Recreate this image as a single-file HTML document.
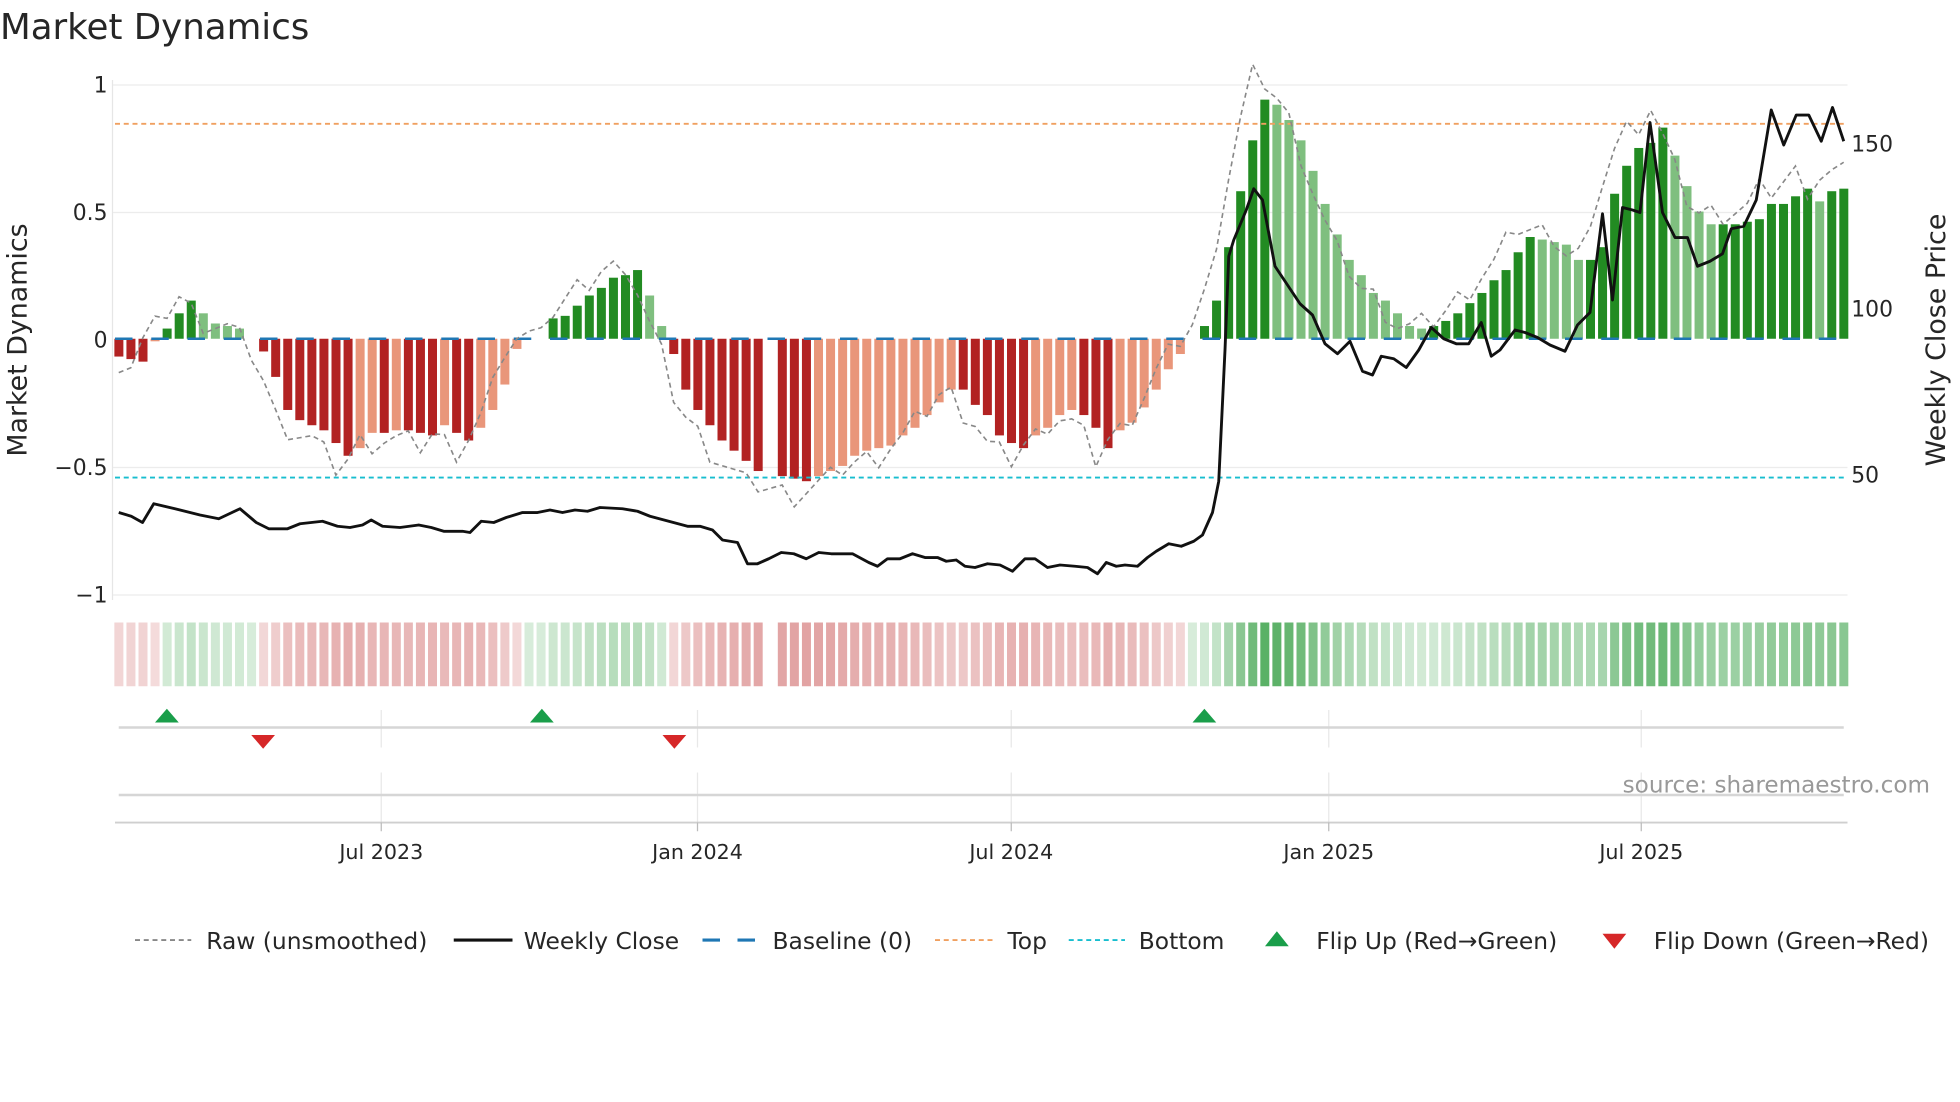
<!DOCTYPE html>
<html><head><meta charset="utf-8"><style>
html,body{margin:0;padding:0;background:#fff;width:1960px;height:1102px;overflow:hidden}
svg{display:block}
text{font-family:"DejaVu Sans","Liberation Sans",sans-serif;fill:#262626}
</style></head><body>
<svg id="s" width="1960" height="1102" viewBox="0 0 1568 881.6" xmlns="http://www.w3.org/2000/svg">
<text x="0" y="31" font-size="28.5">Market Dynamics</text>
<g stroke="#ececec" stroke-width="1">
<line x1="90" y1="68" x2="1478" y2="68"/><line x1="90" y1="170" x2="1478" y2="170"/>
<line x1="90" y1="374" x2="1478" y2="374"/><line x1="90" y1="476" x2="1478" y2="476"/>
</g>
<line x1="90" y1="64" x2="90" y2="480" stroke="#e6e6e6"/>
<g font-size="17.5" text-anchor="end">
<text x="86" y="74">1</text><text x="86" y="176">0.5</text><text x="86" y="278">0</text>
<text x="86" y="380">−0.5</text><text x="86" y="482">−1</text>
</g>
<g font-size="17.5">
<text x="1481" y="121">150</text><text x="1481" y="253">100</text><text x="1481" y="386">50</text>
</g>
<text transform="translate(21,272) rotate(-90)" font-size="21.5" text-anchor="middle">Market Dynamics</text>
<text transform="translate(1556,272) rotate(-90)" font-size="21.5" text-anchor="middle">Weekly Close Price</text>
<g id="bars"></g>
<line x1="92" y1="271" x2="1478" y2="271" stroke="#1f77b4" stroke-width="2" stroke-dasharray="14,15"/>
<line x1="92" y1="99" x2="1478" y2="99" stroke="#f0a060" stroke-width="1.5" stroke-dasharray="4,3"/>
<line x1="92" y1="382" x2="1478" y2="382" stroke="#17becf" stroke-width="1.5" stroke-dasharray="4,3"/>
<polyline id="raw" fill="none" stroke="#888" stroke-width="1.3" stroke-dasharray="4,3"/>
<polyline id="price" fill="none" stroke="#111" stroke-width="2.3" stroke-linejoin="round"/>
<g id="strip"></g>
<g stroke="#e8e8e8"><line x1="305" y1="568" x2="305" y2="598"/><line x1="558" y1="568" x2="558" y2="598"/><line x1="809" y1="568" x2="809" y2="598"/><line x1="1063" y1="568" x2="1063" y2="598"/><line x1="1313" y1="568" x2="1313" y2="598"/>
<line x1="305" y1="618" x2="305" y2="658"/><line x1="558" y1="618" x2="558" y2="658"/><line x1="809" y1="618" x2="809" y2="658"/><line x1="1063" y1="618" x2="1063" y2="658"/><line x1="1313" y1="618" x2="1313" y2="658"/></g>
<line x1="95" y1="582" x2="1475" y2="582" stroke="#d6d6d6" stroke-width="2"/>
<line x1="95" y1="636" x2="1475" y2="636" stroke="#d6d6d6" stroke-width="2"/>
<line x1="92" y1="658" x2="1478" y2="658" stroke="#cfcfcf" stroke-width="1.5"/>
<g stroke="#bbb"><line x1="305" y1="658" x2="305" y2="665"/><line x1="558" y1="658" x2="558" y2="665"/><line x1="809" y1="658" x2="809" y2="665"/><line x1="1063" y1="658" x2="1063" y2="665"/><line x1="1313" y1="658" x2="1313" y2="665"/></g>
<g fill="#1a9e4a"><polygon points="124,578 143,578 133.5,567"/><polygon points="424,578 443,578 433.5,567"/><polygon points="954,578 973,578 963.5,567"/></g>
<g fill="#d62728"><polygon points="201,588 220,588 210.5,599"/><polygon points="530,588 549,588 539.5,599"/></g>
<text x="1544" y="634" font-size="18.5" fill="#999" style="fill:#999" text-anchor="end">source: sharemaestro.com</text>
<g font-size="16.5" text-anchor="middle"><text x="305" y="687">Jul 2023</text><text x="558" y="687">Jan 2024</text><text x="809" y="687">Jul 2024</text><text x="1063" y="687">Jan 2025</text><text x="1313" y="687">Jul 2025</text></g>
<g font-size="18.7">
<line x1="108" y1="752" x2="153" y2="752" stroke="#888" stroke-width="1.5" stroke-dasharray="4,3"/><text x="165" y="759">Raw (unsmoothed)</text>
<line x1="363" y1="752" x2="410" y2="752" stroke="#111" stroke-width="2.5"/><text x="419" y="759">Weekly Close</text>
<line x1="562" y1="752" x2="607" y2="752" stroke="#1f77b4" stroke-width="2.5" stroke-dasharray="14,14"/><text x="618" y="759">Baseline (0)</text>
<line x1="748" y1="752" x2="794" y2="752" stroke="#f0a060" stroke-width="1.5" stroke-dasharray="4,3"/><text x="806" y="759">Top</text>
<line x1="855" y1="752" x2="900" y2="752" stroke="#17becf" stroke-width="1.5" stroke-dasharray="4,3"/><text x="911" y="759">Bottom</text>
<polygon points="1012,757 1031,757 1021.5,745" fill="#1a9e4a"/><text x="1053" y="759">Flip Up (Red→Green)</text>
<polygon points="1282,747 1301,747 1291.5,759" fill="#d62728"/><text x="1323" y="759">Flip Down (Green→Red)</text>
</g>
</svg>
<script>
var v=[-0.07,-0.08,-0.09,-0.01,0.04,0.1,0.15,0.1,0.06,0.05,0.04,0,-0.05,-0.15,-0.28,-0.32,-0.34,-0.36,-0.41,-0.46,-0.43,-0.37,-0.37,-0.36,-0.36,-0.37,-0.38,-0.34,-0.37,-0.40,-0.35,-0.28,-0.18,-0.04,0,0,0.08,0.09,0.13,0.17,0.2,0.24,0.25,0.27,0.17,0.05,-0.06,-0.2,-0.28,-0.34,-0.4,-0.44,-0.48,-0.52,null,-0.54,-0.55,-0.56,-0.54,-0.52,-0.5,-0.46,-0.44,-0.43,-0.42,-0.38,-0.35,-0.3,-0.25,-0.2,-0.2,-0.26,-0.3,-0.38,-0.41,-0.43,-0.38,-0.35,-0.3,-0.28,-0.3,-0.35,-0.43,-0.36,-0.33,-0.27,-0.2,-0.12,-0.06,0,0.05,0.15,0.36,0.58,0.78,0.94,0.92,0.86,0.78,0.66,0.53,0.41,0.31,0.25,0.18,0.15,0.1,0.05,0.04,0.05,0.07,0.1,0.14,0.18,0.23,0.27,0.34,0.4,0.39,0.38,0.37,0.31,0.31,0.36,0.57,0.68,0.75,0.77,0.83,0.72,0.6,0.5,0.45,0.45,0.45,0.46,0.47,0.53,0.53,0.56,0.59,0.54,0.58,0.59];
var NS="http://www.w3.org/2000/svg",sp=9.65,x0=95,h="",st="",raw=[],prev=0;
function Y(a){return 271-a*203.5}
for(var i=0;i<v.length;i++){var a=v[i],x=x0+i*sp;if(a===null){prev=0;continue;}
 var dark=Math.abs(a)>=Math.abs(prev)-0.001;prev=a;
 var c=a>=0?(dark?"#228b22":"#7fbf7f"):(dark?"#b22222":"#e9967a");
 var y=Math.min(Y(a),271),hh=Math.abs(a)*203.5;
 if(hh>0.5)h+='<rect x="'+(x-3.5)+'" y="'+y+'" width="7.2" height="'+hh+'" fill="'+c+'"/>';
 var al=0.18+Math.min(Math.abs(a),0.95)*0.6;
 var sc=a>=0?"rgba(34,150,50,"+al+")":"rgba(190,50,50,"+(0.17+Math.abs(a)*0.5)+")";
 st+='<rect x="'+(x-3.5)+'" y="498" width="7.2" height="51" fill="'+sc+'"/>';
 var n=v[i+1]==null?a:v[i+1];var r=n*1.1+((i*37)%7-3)*0.015;
 raw.push(x+","+Y(r).toFixed(1));}
document.getElementById("bars").innerHTML=h;
document.getElementById("strip").innerHTML=st;
document.getElementById("raw").setAttribute("points",raw.join(" "));
document.getElementById("price").setAttribute("points","95,410 105,413 114,418 123,403 140,407 160,412 175,415 192,407 205,418 215,423 230,423 240,419 258,417 270,421 280,422 290,420 297,416 306,421 320,422 335,420 345,422 355,425 370,425 376,426 385,417 395,418 405,414 418,410 430,410 440,408 450,410 460,408 470,409 480,406 498,407 510,409 520,413 535,417 550,421 560,421 570,424 578,432 590,434 598,451 606,451 615,447 625,442 635,443 645,447 655,442 665,443 682,443 695,450 702,453 710,447 720,447 730,443 740,446 750,446 757,449 765,448 772,453 780,454 790,451 800,452 810,457 820,447 828,447 838,454 848,452 860,453 870,454 878,459 885,450 893,453 900,452 910,453 918,446 925,441 935,435 945,437 955,433 962,428 970,410 975,385 980,280 983,205 987,192 992,180 997,168 1003,151 1010,160 1020,213 1030,228 1040,243 1050,252 1060,275 1070,283 1080,273 1090,297 1098,300 1105,285 1115,287 1125,294 1135,280 1145,262 1155,271 1165,275 1175,275 1185,258 1193,285 1200,280 1212,264 1220,266 1230,270 1240,276 1252,281 1262,260 1272,250 1282,171 1290,240 1298,166 1306,168 1312,170 1320,98 1330,170 1340,190 1350,190 1358,213 1368,209 1378,203 1385,183 1395,181 1405,160 1417,88 1427,116 1437,92 1447,92 1457,113 1466,86 1475,113");
</script>
</body></html>
